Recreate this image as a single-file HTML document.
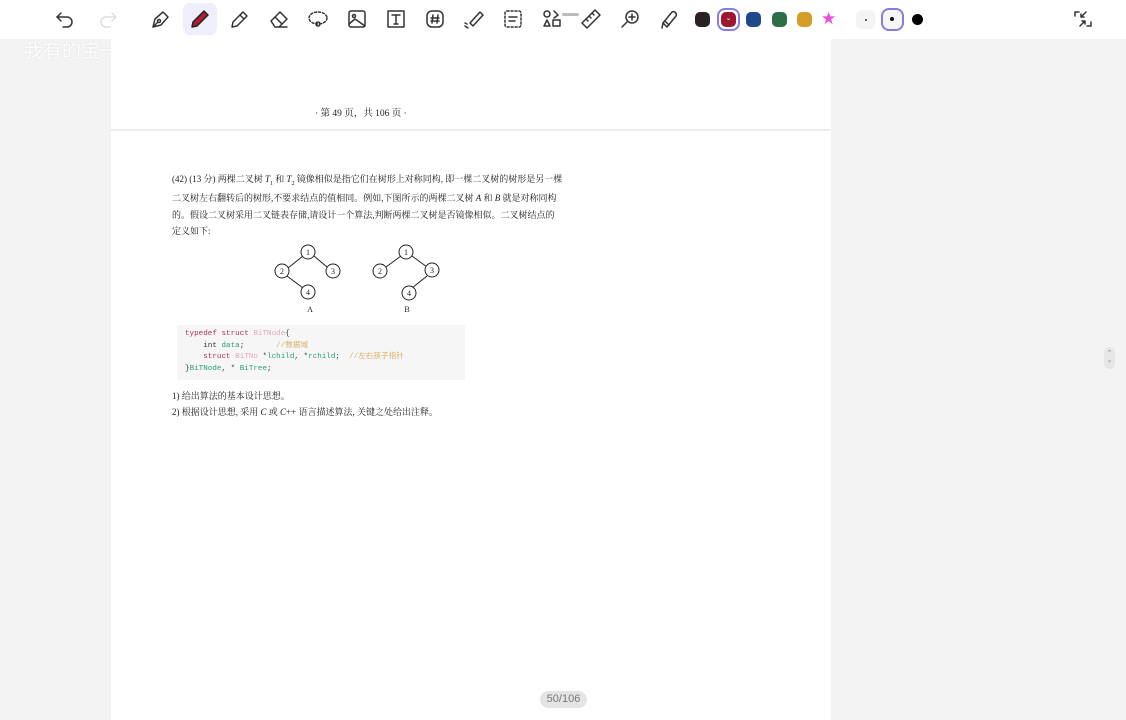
<!DOCTYPE html>
<html><head><meta charset="utf-8">
<style>
*{margin:0;padding:0;box-sizing:border-box}
body{width:1126px;height:720px;overflow:hidden;background:#f3f3f3;font-family:"Liberation Serif","Noto Serif CJK SC",serif;position:relative}
#tb{position:absolute;left:0;top:0;width:1126px;height:39px;background:#fff}
.ic{position:absolute;top:7px;width:24px;height:24px}
.ic svg{width:24px;height:24px;fill:none;stroke:#333;stroke-width:1.5;stroke-linecap:round;stroke-linejoin:round}
.sw{position:absolute;top:12px;width:15px;height:15px;border-radius:5px}
#page{position:absolute;left:111px;top:39px;width:720px;height:681px;background:#fff}
#hdr{position:absolute;left:204px;top:66px;font-size:9.5px;color:#222;white-space:nowrap}
#line{position:absolute;left:0;top:90px;width:720px;height:2px;background:#ececec}
.t{position:absolute;left:61px;font-size:9px;color:#222;white-space:nowrap}
#code{position:absolute;left:66px;top:286px;width:288px;height:55px;background:#f6f6f6;font-family:"Liberation Mono","Noto Sans CJK SC",monospace;font-size:7.6px;line-height:11.6px;padding:4px 8px;color:#333}
.k{color:#b0305a}.p{color:#e6a6b8}.g{color:#2a9d7a}.c{color:#d8b068}
#pg{position:absolute;left:540px;top:691px;width:47px;height:17px;border-radius:9px;background:#e4e4e4;color:#777;font-family:"Liberation Sans",sans-serif;font-size:11px;text-align:center;line-height:17px}
</style></head><body>
<div id="tb">
<div class="ic" style="left:53px"><svg viewBox="0 0 24 24"><path d="M8 6 L4 10 L8 14"/><path d="M4 10 H14 a5 5 0 0 1 0 10 H10"/></svg></div>
<div class="ic" style="left:96px"><svg viewBox="0 0 24 24" style="stroke:#ddd"><path d="M16 6 L20 10 L16 14"/><path d="M20 10 H10 a5 5 0 0 0 0 10 H14"/></svg></div>
<div class="ic" style="left:149px"><svg viewBox="0 0 24 24"><path d="M4 20 L6 12 L14 5 L19 10 L12 18 Z"/><circle cx="10" cy="14" r="1.5"/><path d="M4 20 L9 15"/></svg></div>
<div style="position:absolute;left:183px;top:3px;width:34px;height:32px;background:#efeefb;border-radius:7px"></div>
<div class="ic" style="left:188px"><svg viewBox="0 0 24 24"><path d="M4 20 L5 15 L16 4 L20 8 L9 19 Z" fill="#b01c34" stroke="#222"/></svg></div>
<div class="ic" style="left:228px"><svg viewBox="0 0 24 24"><path d="M4 20 L5 15 L15 5 L19 9 L9 19 Z"/><path d="M12 8 L16 12"/></svg></div>
<div class="ic" style="left:267px"><svg viewBox="0 0 24 24"><path d="M4 14 L13 5 L20 12 L12 20 H8 Z"/><path d="M8 10 L15 17"/><path d="M12 20 H20"/></svg></div>
<div class="ic" style="left:306px"><svg viewBox="0 0 24 24" stroke-dasharray="2 2"><ellipse cx="12" cy="11" rx="9" ry="6"/><circle cx="12" cy="17" r="2" stroke-dasharray="none"/></svg></div>
<div class="ic" style="left:345px"><svg viewBox="0 0 24 24"><rect x="4" y="4" width="16" height="16" rx="2"/><circle cx="9" cy="9" r="1.5"/><path d="M4 17 L10 12 L20 19"/></svg></div>
<div class="ic" style="left:384px"><svg viewBox="0 0 24 24"><rect x="4" y="4" width="16" height="16"/><path d="M8 8 H16 M12 8 V17 M10 17 H14"/></svg></div>
<div class="ic" style="left:423px"><svg viewBox="0 0 24 24"><rect x="4" y="4" width="16" height="16" rx="5"/><path d="M10 8 L9 16 M15 8 L14 16 M8 11 H16 M8 14 H16"/></svg></div>
<div class="ic" style="left:462px"><svg viewBox="0 0 24 24"><path d="M8 16 L18 5 L21 8 L11 19 Z"/><path d="M3 19 L6 21 M3 16 L5 17"/></svg></div>
<div class="ic" style="left:501px"><svg viewBox="0 0 24 24"><rect x="4" y="4" width="16" height="16" rx="2" stroke-dasharray="2 2"/><path d="M8 10 H16 M8 14 H14"/></svg></div>
<div class="ic" style="left:540px"><svg viewBox="0 0 24 24"><circle cx="7" cy="7" r="3"/><path d="M14 4 L18 8 L14 11"/><path d="M7 13 L10 19 H4 Z"/><rect x="13" y="13" width="7" height="6"/></svg></div>
<div style="position:absolute;left:562px;top:13px;width:17px;height:3px;background:#bbb;border-radius:2px"></div>
<div class="ic" style="left:579px"><svg viewBox="0 0 24 24"><path d="M3 16 L16 3 L21 8 L8 21 Z"/><path d="M7 12 L9 14 M10 9 L12 11 M13 6 L15 8"/></svg></div>
<div class="ic" style="left:618px"><svg viewBox="0 0 24 24"><circle cx="14" cy="10" r="6"/><path d="M14 7 V13 M11 10 H17 M9 15 L4 20"/></svg></div>
<div class="ic" style="left:657px"><svg viewBox="0 0 24 24"><path d="M6 16 L15 5 a3 3 0 0 1 4 4 L10 20 Z"/><path d="M8 14 L12 18 M6 16 L5 21"/></svg></div>
<div class="sw" style="left:695px;background:#2a2222"></div>
<div style="position:absolute;left:717px;top:8px;width:23px;height:23px;border:2px solid #8a7be0;border-radius:8px"></div>
<div class="sw" style="left:721px;background:#9c1832;color:#fff;font-size:7px;text-align:center;line-height:13px">⌄</div>
<div class="sw" style="left:746px;background:#1e4a8c"></div>
<div class="sw" style="left:772px;background:#2e6e47"></div>
<div class="sw" style="left:797px;background:#d49d28"></div>
<div style="position:absolute;left:821px;top:9px;font-size:17px;color:#ea4fd8;font-family:'DejaVu Sans'">★</div>
<div style="position:absolute;left:856px;top:10px;width:19px;height:19px;border-radius:6px;background:#f4f4f4"></div>
<div style="position:absolute;left:865px;top:19px;width:2px;height:2px;border-radius:1px;background:#333"></div>
<div style="position:absolute;left:881px;top:8px;width:23px;height:23px;border:2px solid #8a7be0;border-radius:8px;background:#f6f6f6"></div>
<div style="position:absolute;left:890px;top:17px;width:4px;height:4px;border-radius:2px;background:#111"></div>
<div style="position:absolute;left:912px;top:14px;width:11px;height:11px;border-radius:6px;background:#000"></div>
<div class="ic" style="left:1071px"><svg viewBox="0 0 24 24"><path d="M4 9 V5 H8 M16 19 H20 V15 M10 10 L15 5 M10 10 H13 M10 10 V7 M14 14 L9 19 M14 14 H11 M14 14 V17"/></svg></div>
</div>
<div style="position:absolute;left:24px;top:36px;font-family:'Noto Sans CJK SC',sans-serif;font-size:19px;color:#fff;opacity:.85;text-shadow:0 0 2px #ddd">我有的宝一个宝</div>
<div id="page">
<div id="hdr">· 第 49 页，共 106 页 ·</div>
<div id="line"></div>
<div class="t" style="top:133px">(42) (13 分) 两棵二叉树 <i>T</i><sub style="font-size:6px">1</sub> 和 <i>T</i><sub style="font-size:6px">2</sub> 镜像相似是指它们在树形上对称同构, 即一棵二叉树的树形是另一棵</div>
<div class="t" style="top:152px">二叉树左右翻转后的树形,不要求结点的值相同。例如,下图所示的两棵二叉树 <i>A</i> 和 <i>B</i> 就是对称同构</div>
<div class="t" style="top:169px">的。假设二叉树采用二叉链表存储,请设计一个算法,判断两棵二叉树是否镜像相似。二叉树结点的</div>
<div class="t" style="top:185px">定义如下:</div>
<svg style="position:absolute;left:155px;top:200px" width="190" height="80" viewBox="0 0 190 80" font-family="Liberation Serif" font-size="8" text-anchor="middle">
<g stroke="#222" fill="none" stroke-width="1">
<line x1="37" y1="17" x2="22" y2="29"/><line x1="48" y1="17" x2="61" y2="28"/><line x1="21" y1="37" x2="37" y2="49"/>
<circle cx="42" cy="13" r="7" fill="#fff"/><circle cx="16" cy="32" r="7" fill="#fff"/><circle cx="67" cy="32" r="7" fill="#fff"/><circle cx="42" cy="53" r="7" fill="#fff"/>
<line x1="135" y1="17" x2="120" y2="28"/><line x1="146" y1="17" x2="161" y2="28"/><line x1="161" y1="37" x2="146" y2="49"/>
<circle cx="140" cy="13" r="7" fill="#fff"/><circle cx="114" cy="32" r="7" fill="#fff"/><circle cx="166" cy="31" r="7" fill="#fff"/><circle cx="143" cy="54" r="7" fill="#fff"/>
</g>
<g fill="#222"><text x="42" y="16">1</text><text x="16" y="35">2</text><text x="67" y="35">3</text><text x="42" y="56">4</text><text x="44" y="73">A</text>
<text x="140" y="16">1</text><text x="114" y="35">2</text><text x="166" y="34">3</text><text x="143" y="57">4</text><text x="141" y="73">B</text></g>
</svg>
<div id="code"><span class="k">typedef struct</span> <span class="p">BiTNode</span>{<br>&nbsp;&nbsp;&nbsp;&nbsp;int <span class="g">data</span>;&nbsp;&nbsp;&nbsp;&nbsp;&nbsp;&nbsp;&nbsp;<span class="c">//数据域</span><br>&nbsp;&nbsp;&nbsp;&nbsp;<span class="k">struct</span> <span class="p">BiTNo</span> *<span class="g">lchild</span>, *<span class="g">rchild</span>;&nbsp;&nbsp;<span class="c">//左右孩子指针</span><br>}<span class="g">BiTNode</span>, * <span class="g">BiTree</span>;</div>
<div class="t" style="top:350px">1) 给出算法的基本设计思想。</div>
<div class="t" style="top:366px">2) 根据设计思想, 采用 <i>C</i> 或 <i>C</i>++ 语言描述算法, 关键之处给出注释。</div>
</div>
<div id="pg">50/106</div>
<div style="position:absolute;left:1104px;top:347px;width:11px;height:22px;border-radius:5px;background:#e6e6e6;color:#888;font-size:7px;text-align:center;line-height:7px;padding-top:3px;font-family:'DejaVu Sans'">⌃<br>⌄</div>
</body></html>
